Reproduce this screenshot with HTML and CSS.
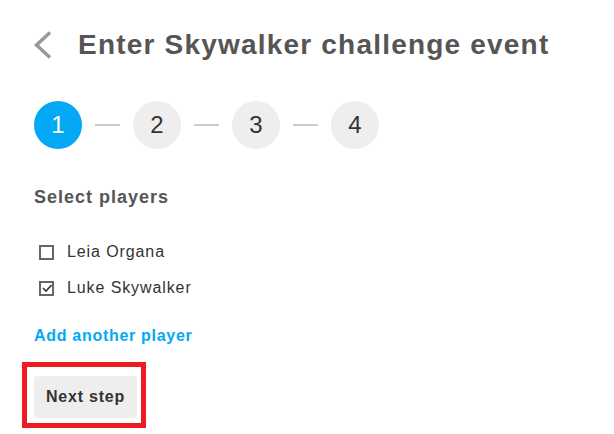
FILE: index.html
```html
<!DOCTYPE html>
<html>
<head lang="en">
    <meta charset="UTF-8">
    <title>Enter Skywalker challenge event</title>
    <link rel="stylesheet" href="styles.css">
</head>
<body>
<div class="page">
    <div class="header">
        <a class="back" href="#">
            <svg width="20" height="28" viewBox="0 0 20 28"><path d="M17 1.5 L3.5 14 L17 26.5" fill="none" stroke="#999" stroke-width="3.5"/></svg>
        </a>
        <h1 class="title">Enter Skywalker challenge event</h1>
    </div>

    <div class="steps">
        <span class="step active">1</span>
        <span class="dash"></span>
        <span class="step">2</span>
        <span class="dash"></span>
        <span class="step">3</span>
        <span class="dash"></span>
        <span class="step">4</span>
    </div>

    <h2 class="label">Select players</h2>

    <ul class="players">
        <li>
            <span class="box"></span>
            <span class="name">Leia Organa</span>
        </li>
        <li>
            <span class="box checked">
                <svg width="10" height="10" viewBox="0 0 10 10"><path d="M1 5 L4 8 L9.5 2" fill="none" stroke="#333" stroke-width="1.6"/></svg>
            </span>
            <span class="name">Luke Skywalker</span>
        </li>
    </ul>

    <a class="add" href="#">Add another player</a>

    <div class="focus">
        <button class="next" type="button">Next step</button>
    </div>
</div>
</body>
</html>
```

FILE: styles.css
```css
body{margin:0;padding:0;background:#fff;font-family:"Liberation Sans",Arial,sans-serif;}
.page{padding:27px 0 0 34px;}

.header{display:flex;align-items:center;height:36px;}
.back{display:flex;width:44px;margin-left:-1px;}
.back svg{display:block;}
.title{margin:0 0 0 1px;font-size:28px;line-height:36px;font-weight:bold;color:#555;letter-spacing:1.2px;}

.steps{display:flex;align-items:center;margin-top:38px;}
.step{width:48px;height:48px;border-radius:50%;background:#eee;color:#333;font-size:24px;display:flex;align-items:center;justify-content:center;}
.step.active{background:#03a9f4;color:#fff;}
.dash{width:25px;height:2px;background:#ccc;margin:0 13px;}

.label{margin:36px 0 0;font-size:18px;line-height:24px;font-weight:bold;color:#555;letter-spacing:1px;}

.players{list-style:none;margin:25px 0 0;padding:0;}
.players li{display:flex;align-items:center;height:36px;}
.box{width:11px;height:11px;border:2px solid #666;margin-left:5px;display:flex;align-items:center;justify-content:center;}
.name{margin-left:13px;font-size:16px;color:#333;letter-spacing:0.9px;}

.add{display:block;margin-top:20px;font-size:16px;line-height:20px;font-weight:bold;color:#03a9f4;text-decoration:none;letter-spacing:0.7px;}

.focus{display:inline-block;margin:16px 0 0 -12px;border:5px solid #ed1c24;padding:9px 4px 5px 7px;}
.next{display:block;width:103px;height:42px;border:0;border-radius:4px;background:#eee;color:#333;font-family:"Liberation Sans",Arial,sans-serif;font-size:16px;font-weight:bold;padding:0;letter-spacing:0.8px;}
```
